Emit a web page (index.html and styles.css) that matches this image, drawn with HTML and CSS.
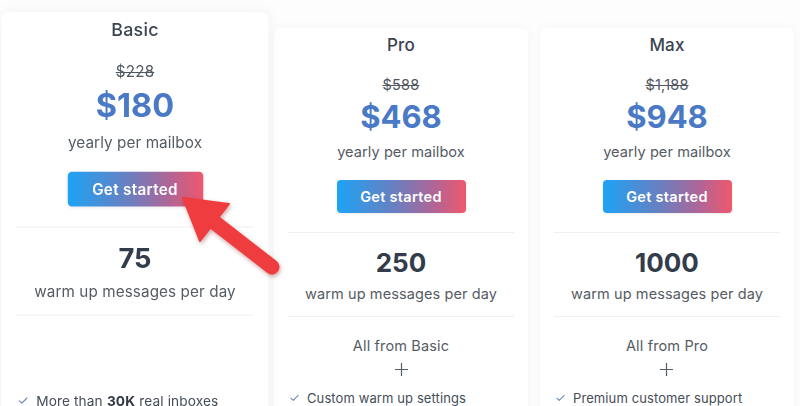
FILE: index.html
```html
<!DOCTYPE html>
<html lang="en">
<head>
<meta charset="utf-8">
<title>Pricing</title>
<link rel="stylesheet" href="styles.css">
</head>
<body>
<main class="plans">
  <section class="card card-featured">
    <h2 class="plan-name">Basic</h2>
    <div class="old-price">$228</div>
    <div class="price">$180</div>
    <div class="period">yearly per mailbox</div>
    <a class="btn" href="#">Get started</a>
    <hr class="divider">
    <div class="volume">75</div>
    <div class="volume-label">warm up messages per day</div>
    <hr class="divider">
    <div class="inherit inherit-empty"></div>
    <ul class="features">
      <li><svg class="check" viewBox="0 0 10 8"><path d="M1 4.2 3.6 6.6 9 1.2"/></svg>More than <b>30K</b> real inboxes</li>
    </ul>
  </section>
  <section class="card">
    <h2 class="plan-name">Pro</h2>
    <div class="old-price">$588</div>
    <div class="price">$468</div>
    <div class="period">yearly per mailbox</div>
    <a class="btn" href="#">Get started</a>
    <hr class="divider">
    <div class="volume">250</div>
    <div class="volume-label">warm up messages per day</div>
    <hr class="divider">
    <div class="inherit">
      <div class="inherit-text">All from Basic</div>
      <svg class="plus" viewBox="0 0 14 14"><path d="M7 0v14M0 7h14"/></svg>
    </div>
    <ul class="features">
      <li><svg class="check" viewBox="0 0 10 8"><path d="M1 4.2 3.6 6.6 9 1.2"/></svg>Custom warm up settings</li>
    </ul>
  </section>
  <section class="card">
    <h2 class="plan-name">Max</h2>
    <div class="old-price">$1,188</div>
    <div class="price">$948</div>
    <div class="period">yearly per mailbox</div>
    <a class="btn" href="#">Get started</a>
    <hr class="divider">
    <div class="volume">1000</div>
    <div class="volume-label">warm up messages per day</div>
    <hr class="divider">
    <div class="inherit">
      <div class="inherit-text">All from Pro</div>
      <svg class="plus" viewBox="0 0 14 14"><path d="M7 0v14M0 7h14"/></svg>
    </div>
    <ul class="features">
      <li><svg class="check" viewBox="0 0 10 8"><path d="M1 4.2 3.6 6.6 9 1.2"/></svg>Premium customer support</li>
    </ul>
  </section>
</main>
<svg class="annotation" viewBox="0 0 800 406" width="800" height="406">
  <g class="arrow">
    <line x1="272" y1="267" x2="214" y2="222" />
    <polygon points="183,198 229,204 200,241" />
  </g>
</svg>
</body>
</html>
```
FILE: styles.css
```css
html, body {
  margin: 0;
  padding: 0;
  background: #fdfdfd;
  height: 406px;
  overflow: hidden;
}
body {
  font-family: Inter, "Noto Sans", "Liberation Sans", sans-serif;
  color: #565c64;
  position: relative;
}
.plans {
  display: grid;
  grid-template-columns: repeat(3, 254px);
  column-gap: 12px;
  padding-left: 8px;
  padding-top: 28px;
}
.card {
  background: #fff;
  border-radius: 6px;
  box-shadow: 0 0 12px rgba(0, 0, 0, 0.035);
  height: 640px;
  padding: 5px 14px 0;
  box-sizing: border-box;
  display: flex;
  flex-direction: column;
  align-items: center;
  text-align: center;
}
.card-featured {
  transform: scale(1.05);
  transform-origin: 50% 317px;
  box-shadow: 0 0 14px rgba(0, 0, 0, 0.05);
}
.plan-name {
  margin: 0;
  font-size: 17px;
  line-height: 24px;
  font-weight: 500;
  color: #3a4350;
  letter-spacing: 0.2px;
}
.old-price {
  margin-top: 18px;
  font-size: 14.5px;
  line-height: 20px;
  color: #505760;
  text-decoration: line-through;
  letter-spacing: 0.2px;
}
.price {
  margin-top: 4px;
  font-size: 31px;
  line-height: 36px;
  font-weight: 700;
  color: #4a79c5;
}
.period {
  margin-top: 7px;
  font-size: 14.6px;
  line-height: 20px;
  letter-spacing: 0.05px;
  color: #565c64;
}
.btn {
  margin-top: 18px;
  width: 129px;
  height: 33px;
  border-radius: 4px;
  background: linear-gradient(90deg, #1da3f5 0%, #6a7fc0 45%, #b06596 75%, #ef586d 100%);
  color: #fff;
  font-size: 14.5px;
  font-weight: 600;
  line-height: 33px;
  text-decoration: none;
  letter-spacing: 0.3px;
  box-shadow: 0 1px 3px rgba(0, 0, 0, 0.08);
}
.divider {
  align-self: stretch;
  border: 0;
  height: 1px;
  background: #f0f0f1;
  margin: 19px 0 0;
}
.volume {
  margin-top: 12px;
  font-size: 26px;
  line-height: 36px;
  font-weight: 700;
  color: #333c4a;
}
.volume-label {
  margin-top: 3px;
  margin-bottom: -7px;
  font-size: 14.5px;
  line-height: 20px;
  letter-spacing: 0.1px;
  color: #565c64;
}
.inherit {
  margin-top: 19px;
  height: 46px;
  display: flex;
  flex-direction: column;
  align-items: center;
}
.inherit-empty {
  align-self: stretch;
}
.inherit-text {
  font-size: 14.5px;
  line-height: 20px;
  letter-spacing: 0.15px;
  color: #565c64;
}
.plus {
  margin-top: 7px;
  width: 13px;
  height: 13px;
  stroke: #5a6068;
  stroke-width: 1.3;
  fill: none;
}
.features {
  list-style: none;
  margin: 6px 0 0;
  padding: 0 0 0 2px;
  align-self: stretch;
  text-align: left;
}
.features li {
  display: flex;
  align-items: center;
  font-size: 13px;
  line-height: 20px;
  letter-spacing: 0.1px;
  color: #464d57;
}
.features b {
  font-weight: 700;
  color: #333a45;
  margin: 0 4px;
}
.check {
  width: 9px;
  height: 8px;
  margin-right: 8px;
  fill: none;
  stroke: #6d88b6;
  stroke-width: 1.2;
  stroke-linecap: round;
  stroke-linejoin: round;
}
.annotation {
  position: absolute;
  left: 0;
  top: 0;
  pointer-events: none;
}
.arrow {
  filter: drop-shadow(1px 2px 2px rgba(120, 0, 0, 0.35));
}
.arrow line {
  stroke: #ef3d3f;
  stroke-width: 15;
  stroke-linecap: round;
}
.arrow polygon {
  fill: #ef3d3f;
  stroke: #ef3d3f;
  stroke-width: 2;
  stroke-linejoin: round;
}
```
